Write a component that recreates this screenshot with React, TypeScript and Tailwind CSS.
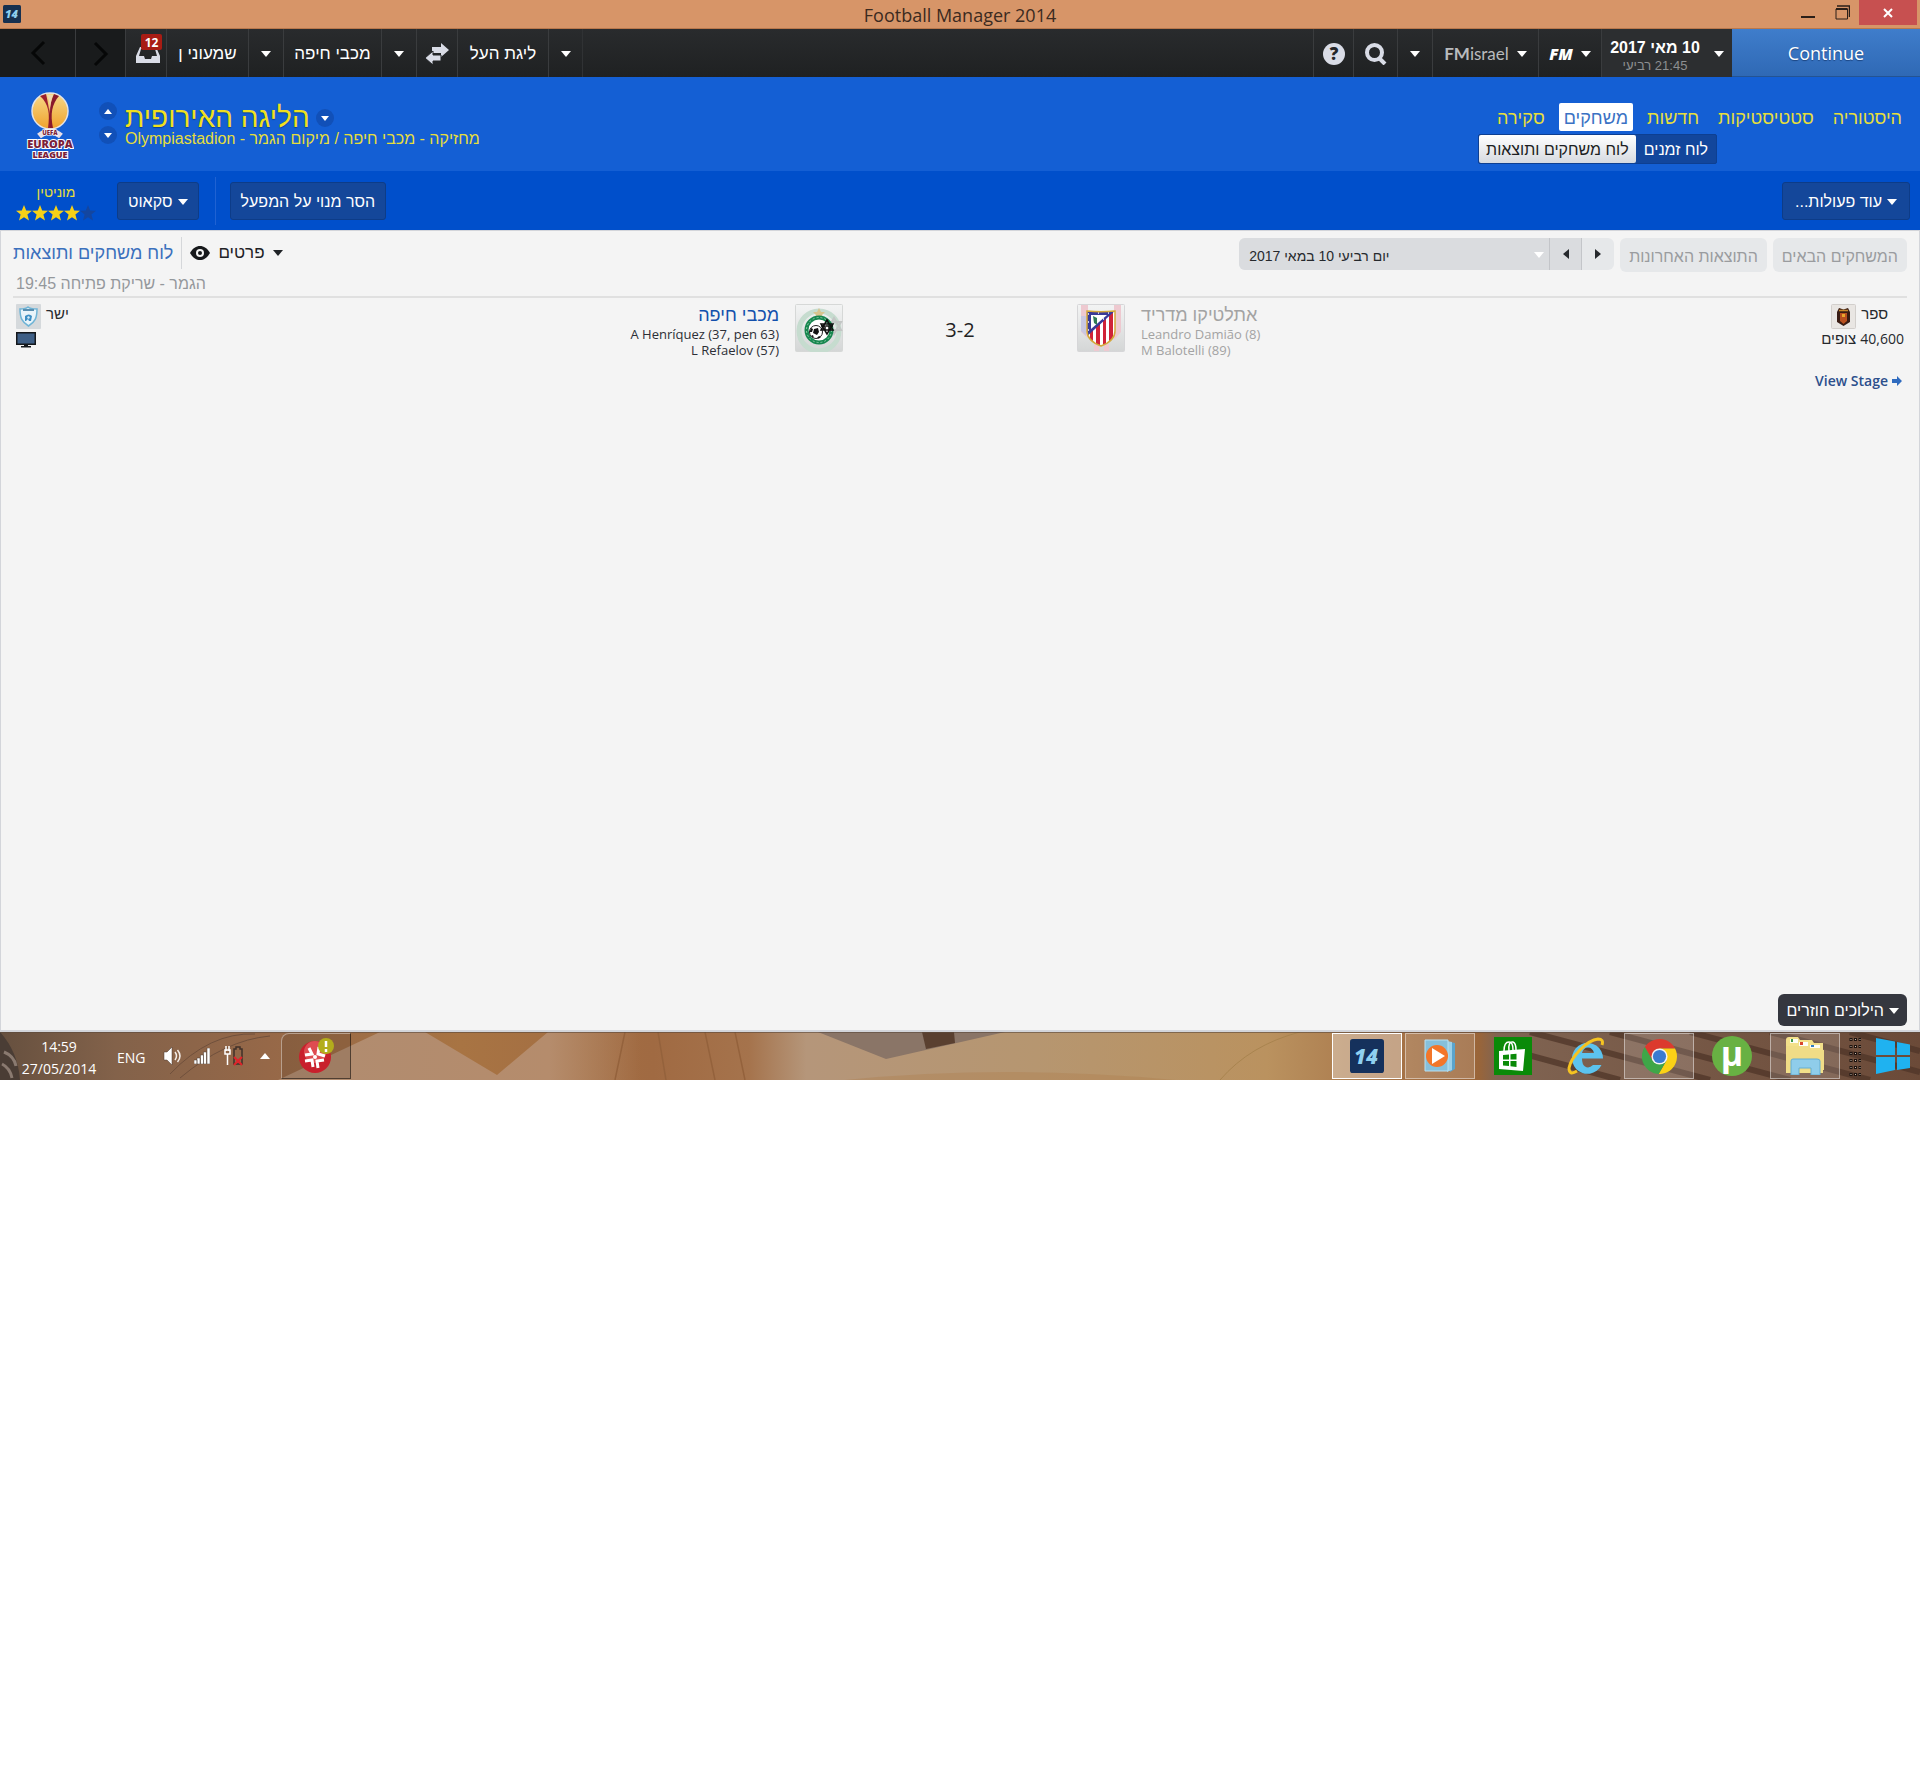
import type { ReactNode } from 'react';
import clsx from 'clsx';

const HE = 'font-["Liberation_Sans",sans-serif]';

function Caret({ className, up }: { className?: string; up?: boolean }) {
  return (
    <svg viewBox="0 0 10 6" className={clsx('w-[10px] h-[6px] shrink-0', up && 'rotate-180', className)} fill="currentColor">
      <path d="M0 0h10L5 6z" />
    </svg>
  );
}

/* ---------- Window title bar ---------- */

function GameIcon({ className, fill }: { className?: string; fill: string }) {
  return (
    <svg viewBox="0 0 36 36" className={className}>
      <rect width="36" height="36" rx="3" fill={fill} />
      <text x="17" y="26" textAnchor="middle" fontFamily="Open Sans, sans-serif" fontSize="22" fontWeight="800" fontStyle="italic" fill="#8fd0f0">
        14
      </text>
    </svg>
  );
}

function TitleBar() {
  return (
    <div className="relative flex items-center justify-between h-[29px] bg-[#d79568] border-b border-[#b9784c]">
      <GameIcon className="w-[18px] h-[18px] ml-[3px]" fill="#17304f" />
      <h1 className="absolute inset-x-0 top-0 text-center text-[18px] leading-[30px] text-[#3b2a20] pointer-events-none">
        Football Manager 2014
      </h1>
      <div className="relative flex self-start h-[25px] mr-[3px]">
        <button aria-label="Minimize" className="w-[34px] flex justify-center items-center pt-2">
          <span className="w-[14px] h-[2px] bg-[#2b1f18]" />
        </button>
        <button aria-label="Restore" className="w-[34px] flex justify-center items-center">
          <svg viewBox="0 0 15 15" className="w-[15px] h-[15px]" fill="none" stroke="#2b1f18">
            <path d="M2 1h12.500v11" strokeWidth="1.500" />
            <path d="M1 4h11.500v10H1z" />
            <path d="M1 4h11.500" strokeWidth="2" />
          </svg>
        </button>
        <button aria-label="Close" className="w-[58px] bg-[#c75050] flex justify-center items-center">
          <svg viewBox="0 0 10 10" className="w-[10px] h-[10px]" stroke="#fff" strokeWidth="2">
            <path d="M1 1l8 8M9 1L1 9" />
          </svg>
        </button>
      </div>
    </div>
  );
}

/* ---------- Main navigation ---------- */

function NavItem({ className, label, children }: { className?: string; label?: string; children: ReactNode }) {
  return (
    <button
      aria-label={label}
      className={clsx('h-full pt-[2px] flex items-center justify-center border-l border-[#3a3c3e] text-white shrink-0', className)}
    >
      {children}
    </button>
  );
}

function NavBar() {
  return (
    <nav className={clsx('flex h-12 bg-linear-to-b from-[#292b2d] to-[#1f2122] text-[17px]', HE)}>
      <button aria-label="Back" className="w-[75px] bg-[#191b1c] flex items-center justify-center">
        <svg viewBox="0 0 16 26" className="w-4 h-[26px]" fill="none" stroke="#060707" strokeWidth="3">
          <path d="M14 2L3 13l11 11" />
        </svg>
      </button>
      <NavItem label="Forward" className="w-[50px] bg-[#191b1c]">
        <svg viewBox="0 0 16 26" className="w-4 h-[26px]" fill="none" stroke="#060707" strokeWidth="3">
          <path d="M2 2l11 11L2 24" />
        </svg>
      </NavItem>
      <NavItem label="Inbox" className="relative w-[41px]">
        <svg viewBox="0 0 24 16" className="w-6 h-4 ml-1 mt-[2px]" fill="#d9dce6">
          <path d="M4 0h16l4 9v7H0V9zM5 2L3 9h5l1 3h6l1-3h5l-2-7z" fillRule="evenodd" />
        </svg>
        <span className="absolute left-[15px] top-[5px] w-[21px] h-4 bg-[#a81c14] rounded-xs text-[12px] leading-[17px] font-bold font-['Open_Sans',sans-serif]">
          12
        </span>
      </NavItem>
      <NavItem className="w-[82px]">שמעוני ן</NavItem>
      <NavItem label="Manager menu" className="w-[35px]"><Caret /></NavItem>
      <NavItem className="w-[98px]">מכבי חיפה</NavItem>
      <NavItem label="Club menu" className="w-[35px]"><Caret /></NavItem>
      <NavItem label="Transfers" className="w-[41px]">
        <svg viewBox="0 0 24 22" className="w-6 h-[22px]" fill="#d9dce6">
          <path d="M24 7l-8-7v4H7v6h9v4z" />
          <path d="M0 15l8-7v4h8v6H8v4z" stroke="#242628" strokeWidth="1" />
        </svg>
      </NavItem>
      <NavItem className="w-[91px]">ליגת העל</NavItem>
      <NavItem label="League menu" className="w-[34px]"><Caret /></NavItem>
      <span className="border-l border-[#303234] flex-1" />
      <NavItem label="Help" className="w-10">
        <svg viewBox="0 0 22 22" className="w-[22px] h-[22px]">
          <circle cx="11" cy="11" r="11" fill="#d9dce6" />
          <text x="11" y="17" textAnchor="middle" fontFamily="Open Sans, sans-serif" fontSize="17" fontWeight="800" fill="#242628">
            ?
          </text>
        </svg>
      </NavItem>
      <NavItem label="Search" className="w-11">
        <svg viewBox="0 0 22 22" className="w-[22px] h-[22px]" fill="none" stroke="#d9dce6">
          <circle cx="9.500" cy="9.500" r="7.500" strokeWidth="4" />
          <path d="M14 15l6 6" strokeWidth="4" />
        </svg>
      </NavItem>
      <NavItem label="Search menu" className="w-[35px]"><Caret /></NavItem>
      <NavItem className="w-[106px] gap-2 font-['Lato',sans-serif] !text-[#b9bbbd]">
        <span><b>FM</b>israel</span>
        <Caret className="text-white" />
      </NavItem>
      <NavItem className="w-[63px] gap-2 font-['Open_Sans',sans-serif]">
        <span className="text-[16px] font-extrabold italic">FM</span>
        <Caret />
      </NavItem>
      <NavItem className="w-[131px] gap-[14px] !bg-[#2c2e30]">
        <span className="flex flex-col items-center pt-1" dir="rtl">
          <span className="text-[16px] leading-5 font-bold">10 מאי 2017</span>
          <span className="text-[13px] leading-4 text-[#8d8f91]">21:45 רביעי</span>
        </span>
        <Caret />
      </NavItem>
      <button className="w-[188px] pt-[2px] bg-linear-to-b from-[#3f7dcb] to-[#2f69b5] border-b border-[#245493] text-white text-[18px] font-medium [text-shadow:0_1px_1px_#1b4480] font-['Open_Sans',sans-serif]">
        Continue
      </button>
    </nav>
  );
}

/* ---------- Competition header ---------- */

function EuropaLogo() {
  return (
    <svg viewBox="0 0 48 68" className="w-12 h-[68px]">
      <defs>
        <linearGradient id="ball" x1="0" y1="0" x2="0" y2="1">
          <stop offset="0" stopColor="#f6d98a" />
          <stop offset="1" stopColor="#f0a22c" />
        </linearGradient>
      </defs>
      <circle cx="24" cy="19" r="18" fill="url(#ball)" stroke="#e3e3e6" strokeWidth="1.500" />
      <path d="M14 4c9 8 10 18 8 32h4C24 24 22 10 20 2z" fill="#9c1f2e" />
      <path d="M33 4c-7 8-9 18-6 32h-3C22 24 24 10 28 2z" fill="#8a1a2c" />
      <path d="M21 3c3 6 3 12 3 17 0-6 1-12 3-17z" fill="#f0d9b0" />
      <path d="M13 44q11-9 22 0" fill="none" stroke="#e9dfe6" strokeWidth="6" />
      <g textAnchor="middle" fontFamily="Open Sans, sans-serif" fontWeight="800" fill="#7b1e3a" stroke="#fff" paintOrder="stroke">
        <text x="24" y="43" fontSize="6" strokeWidth="1">UEFA</text>
        <text x="24" y="56" fontSize="11" strokeWidth="2">EUROPA</text>
        <text x="24" y="66" fontSize="9" strokeWidth="2">LEAGUE</text>
      </g>
    </svg>
  );
}

function RoundCaret({ label, up }: { label: string; up?: boolean }) {
  return (
    <button aria-label={label} className="w-[18px] h-[18px] rounded-full bg-[#1150b8] flex items-center justify-center text-white">
      <Caret up={up} className="!w-2 !h-[5px]" />
    </button>
  );
}

const tabs = ['סקירה', 'משחקים', 'חדשות', 'סטטיסטיקות', 'היסטוריה'];

function Header() {
  return (
    <header className="flex justify-between h-[94px] bg-[#145fd4]">
      <div className="flex pt-[15px] pl-[26px]">
        <EuropaLogo />
        <div className="flex flex-col gap-[6px] pt-[10px] ml-[25px]">
          <RoundCaret label="Previous competition" up />
          <RoundCaret label="Next competition" />
        </div>
        <div className={clsx('ml-2 pt-[14px] text-[#f0e01e]', HE)}>
          <div className="flex items-center gap-[6px]">
            <h2 className="text-[28px] leading-6 [text-shadow:0_1px_1px_#0a3f96]">הליגה האירופית</h2>
            <RoundCaret label="Competition menu" />
          </div>
          <p dir="rtl" className="text-[16px] leading-[18px] text-[#e6de3c]">
            מחזיקה - מכבי חיפה / מיקום הגמר - Olympiastadion
          </p>
        </div>
      </div>
      <div className={clsx('pt-[26px] pr-[13px]', HE)}>
        <div className="flex items-center gap-[9px] text-[18px] leading-[30px]">
          {tabs.map((tab) => (
            <a
              key={tab}
              href="#"
              className={clsx(
                'h-7 rounded-xs px-[5px]',
                tab === 'משחקים' ? 'bg-white text-[#3a72c4]' : 'text-[#e6de3c]',
              )}
            >
              {tab}
            </a>
          ))}
        </div>
        <div className="mt-[3px] -ml-[14px] inline-flex rounded-xs border border-[#0d3f92] bg-[#12469c] text-[16px] leading-[30px]">
          <a href="#" className="h-7 px-[7px] rounded-xs bg-linear-to-b from-white to-[#d6dae0] text-[#1c1e22]">
            לוח משחקים ותוצאות
          </a>
          <a href="#" className="h-7 px-2 text-white">לוח זמנים</a>
        </div>
      </div>
    </header>
  );
}

/* ---------- Action bar ---------- */

function Star({ on }: { on: boolean }) {
  return (
    <svg viewBox="0 0 16 16" className="w-4 h-4" fill={on ? '#f7d117' : '#1346a0'}>
      <path d="M8 0l2.200 5.600 5.800.2-4.600 3.700L13 15.500 8 12.200l-5 3.300 1.600-6L0 5.800l5.800-.2z" />
    </svg>
  );
}

function ActionButton({ className, children }: { className?: string; children: ReactNode }) {
  return (
    <button
      className={clsx(
        'h-[38px] pt-[2px] px-[10px] flex items-center justify-center gap-[5px] rounded-[3px] border border-[#0d3c88] bg-[#14479a] text-white text-[16px]',
        className,
      )}
    >
      {children}
    </button>
  );
}

function ActionBar() {
  return (
    <div className={clsx('flex items-center h-[59px] bg-[#004fcb] pl-[15px] pr-[10px]', HE)}>
      <div className="w-[82px] flex flex-col items-center gap-[3px] pt-[1px]">
        <span className="text-[14px] leading-5 text-[#e6de3c]">מוניטין</span>
        <div className="flex">
          {[1, 2, 3, 4, 5].map((n) => <Star key={n} on={n < 5} />)}
        </div>
      </div>
      <ActionButton className="ml-5">סקאוט<Caret /></ActionButton>
      <span className="ml-4 mr-[14px] w-px h-12 bg-[#1f62d3]" />
      <ActionButton>הסר מנוי על המפעל</ActionButton>
      <ActionButton className="ml-auto min-w-32"><span dir="rtl">עוד פעולות...</span><Caret /></ActionButton>
    </div>
  );
}

/* ---------- Fixtures panel ---------- */

function IsraelCrest() {
  return (
    <svg viewBox="0 0 25 25" className="w-[25px] h-[25px]">
      <rect width="25" height="25" rx="1" fill="#d5d9dc" />
      <path d="M4 5c3 0 6 0 8-2 2 2 5 2 9 2 0 9-2 13-8.500 17C6 18 4 14 4 5z" fill="#e9f4fa" stroke="#6fb4d6" strokeWidth="1.500" />
      <path d="M7 6h11" stroke="#5a8fb0" strokeWidth="2" />
      <path d="M9 12q4-3 7 0l-1 5h-2l-1-2-2 2H9z" fill="#3f8fc4" />
      <path d="M11 13l2-1 1 2-2 1z" fill="#d7ecf7" />
    </svg>
  );
}

function SpainCrest() {
  return (
    <svg viewBox="0 0 25 25" className="w-[25px] h-[25px]">
      <rect x=".5" y=".5" width="24" height="24" rx="1" fill="#e9e6e3" stroke="#d2cfcc" />
      <path d="M6 8l2-4 4.500 1.500L17 4l2 4v10l-6.500 4L6 18z" fill="#3a1d14" />
      <path d="M9 9h7v8l-3.500 3L9 17z" fill="#b9501f" />
      <path d="M11 10h3v3h-3z" fill="#e9a92c" />
      <path d="M8 6.500h9" stroke="#c98b2b" strokeWidth="1.500" />
    </svg>
  );
}

function MaccabiCrest() {
  return (
    <svg viewBox="0 0 48 48" className="w-12 h-12">
      <defs>
        <linearGradient id="tile" x1="0" y1="0" x2="0" y2="1">
          <stop offset="0" stopColor="#f3f4f4" />
          <stop offset="1" stopColor="#d4d6d6" />
        </linearGradient>
      </defs>
      <rect x=".5" y=".5" width="47" height="47" rx="1" fill="url(#tile)" stroke="#d6d8d7" />
      <circle cx="24" cy="27" r="20" fill="none" stroke="#c6dccf" strokeWidth="5" />
      <path d="M24 4l2 4h4l-3 3 1 4-4-2-4 2 1-4-3-3h4z" fill="#d8c48e" />
      <path d="M39 14l7 12H32zM39 30l-7-12h14z" fill="none" stroke="#c3c6c5" strokeWidth="2" />
      <circle cx="24" cy="26" r="12.500" fill="#fff" stroke="#17874f" strokeWidth="4" />
      <circle cx="24" cy="26" r="12.500" fill="none" stroke="#8ec9a8" strokeWidth="1" strokeDasharray="2 2" />
      <circle cx="21" cy="28" r="6.500" fill="#fff" stroke="#222" strokeWidth="1" />
      <path d="M19 25l4-1 1 4-2 3-4-2zM14.500 28l1.500-4 2 1-1 3zM22 34l2-2 2 1-2 1.500zM16 32l2-1 1 3z" fill="#111" />
      <path d="M32 16l6 10H26zM32 30l-6-10h12z" fill="none" stroke="#111" strokeWidth="1.500" />
      <path d="M26 22h4v4M31 22h3v4M35 22h3" fill="none" stroke="#111" strokeWidth="1.500" />
    </svg>
  );
}

function AtleticoCrest() {
  return (
    <svg viewBox="0 0 48 48" className="w-12 h-12">
      <defs>
        <clipPath id="shield">
          <path d="M10 7c10 1 18 1 28 0v20c0 8-6 12-14 15-8-3-14-7-14-15z" />
        </clipPath>
      </defs>
      <rect x=".5" y=".5" width="47" height="47" rx="1" fill="url(#tile)" stroke="#d6d6d8" />
      <path d="M4 1h7v33l-7-6zM37 1h7v27l-7 8zM17 40h5v7h-5zM27 40h5v7h-5z" fill="#eec9d0" />
      <path d="M4 12h5v20l-5-5z" fill="#c9c8e2" />
      <g clipPath="url(#shield)">
        <path d="M8 5h32v40H8z" fill="#fff" />
        <path d="M13 5h3v40h-3zM19 5h4v40h-4zM26 5h3v40h-3zM32 5h4v40h-4z" fill="#d02339" />
        <path d="M8 5h32L8 34z" fill="#3a3a98" />
        <path d="M14 11h16L14 25z" fill="#fff" />
        <path d="M16 12l4 2v7l-3-2z" fill="#2f7a55" />
        <path d="M11 10h1M21 9h1M31 9h1M11 18h1M11 26h1M26 15h1" stroke="#fff" strokeWidth="1.500" />
      </g>
      <path d="M10 7c10 1 18 1 28 0v20c0 8-6 12-14 15-8-3-14-7-14-15z" fill="none" stroke="#d4a93a" strokeWidth="1.500" />
    </svg>
  );
}

function PanelToolbar() {
  return (
    <div className="flex justify-between h-[38px]">
      <div className="flex items-center pt-[6px]">
        <h3 className="text-[18px] leading-8 text-[#3b70bd]">לוח משחקים ותוצאות</h3>
        <span className="ml-2 mr-2 w-px h-8 bg-[#d5d7da]" />
        <button className="flex items-center gap-2 text-[17px] text-[#1f2226]">
          <svg viewBox="0 0 20 14" className="w-5 h-[14px]">
            <path d="M0 7c3-5 6-7 10-7s7 2 10 7c-3 5-6 7-10 7S3 12 0 7z" fill="#17191c" />
            <circle cx="10" cy="7" r="4" fill="#f4f4f4" />
            <circle cx="10" cy="7" r="2" fill="#17191c" />
          </svg>
          פרטים
          <Caret />
        </button>
      </div>
      <div className="flex pt-[7px] text-[16px]">
        <div className="relative flex h-8 rounded-md overflow-hidden bg-[#e6e8ea]">
          <select
            aria-label="תאריך"
            className="w-[310px] appearance-none bg-[#dadcdf] pl-[10px] pt-1 text-[14px] text-[#26292d]"
          >
            <option>יום רביעי 10 במאי 2017</option>
          </select>
          <Caret className="absolute left-[295px] top-[14px] text-white" />
          <button aria-label="Previous day" className="w-[33px] flex items-center justify-center border-x border-[#c3c5c9] bg-[#dadcdf]">
            <Caret className="rotate-90 text-[#26292d]" />
          </button>
          <button aria-label="Next day" className="w-8 flex items-center justify-center">
            <Caret className="-rotate-90 text-[#26292d]" />
          </button>
        </div>
        <button className="ml-[6px] h-[34px] px-[9px] pt-1 rounded-md bg-[#e6e8ea] text-[#9a9c9f]">התוצאות האחרונות</button>
        <button className="ml-[6px] h-[34px] px-[9px] pt-1 rounded-md bg-[#e6e8ea] text-[#9a9c9f]">המשחקים הבאים</button>
      </div>
    </div>
  );
}

function Scorers({ names }: { names: string[] }) {
  return (
    <ul className="text-[13px] leading-4 font-['Open_Sans',sans-serif]">
      {names.map((name) => <li key={name}>{name}</li>)}
    </ul>
  );
}

function MatchRow() {
  return (
    <div className="grid grid-cols-[1fr_2fr_1fr] pt-[6px] px-[3px]">
      <div className="flex flex-col gap-[3px]">
        <div className="flex gap-[5px]">
          <IsraelCrest />
          <span className="text-[15px] leading-5 text-[#26292d]">ישר</span>
        </div>
        <svg viewBox="0 0 20 16" className="w-5 h-4">
          <rect x=".75" y=".75" width="18.500" height="11.500" fill="#3f5f86" stroke="#15181c" strokeWidth="1.500" />
          <path d="M8 12h4v2h3v1.500H5V14h3z" fill="#15181c" />
        </svg>
      </div>
      <div className="grid grid-cols-[1fr_234px_1fr]">
        <div className="flex justify-end gap-4 text-right">
          <div>
            <a href="#" className="block text-[18px] leading-[22px] text-[#1250ac]">מכבי חיפה</a>
            <div className="text-[#2c2f36]"><Scorers names={['A Henríquez (37, pen 63)', 'L Refaelov (57)']} /></div>
          </div>
          <MaccabiCrest />
        </div>
        <span className="text-center text-[20px] leading-[52px] text-[#222] font-['Open_Sans',sans-serif]">3-2</span>
        <div className="flex gap-4">
          <AtleticoCrest />
          <div className="text-[#a3a3a3]">
            <a href="#" className="block text-[18px] leading-[22px]">אתלטיקו מדריד</a>
            <Scorers names={['Leandro Damião (8)', 'M Balotelli (89)']} />
          </div>
        </div>
      </div>
      <div className="flex flex-col items-end text-[#26292d]">
        <div className="flex gap-[5px] mr-4">
          <SpainCrest />
          <span className="text-[15px] leading-5">ספר</span>
        </div>
        <span dir="rtl" className="text-[15px] leading-5">
          <span className="text-[14px] font-['Open_Sans',sans-serif]">40,600</span> צופים
        </span>
        <a href="#" className="mt-[22px] mr-[2px] flex items-center gap-1 text-[14px] leading-5 font-semibold text-[#2c4f8c] font-['Open_Sans',sans-serif]">
          View Stage
          <svg viewBox="0 0 10 10" className="w-[10px] h-[10px]" fill="#2f6bbf">
            <path d="M0 3h5V0l5 5-5 5V7H0z" />
          </svg>
        </a>
      </div>
    </div>
  );
}

function FixturesPanel() {
  return (
    <main className={clsx('flex-1 flex flex-col bg-[#f4f4f4] border border-b-2 border-[#d3d5da] px-3', HE)}>
      <PanelToolbar />
      <p dir="rtl" className="self-start pl-[3px] pt-[3px] text-[16px] leading-6 text-[#94989c]">
        הגמר - שריקת פתיחה 19:45
      </p>
      <div className="border-t-2 border-[#e0e0e0]" />
      <MatchRow />
      <button className="mt-auto self-end mb-1 h-8 pt-[2px] px-2 flex items-center gap-[5px] rounded-md bg-[#35373f] text-[16px] text-white">
        הילוכים חוזרים
        <Caret />
      </button>
    </main>
  );
}

/* ---------- Windows taskbar ---------- */

function Wallpaper() {
  return (
    <svg viewBox="0 0 1920 48" preserveAspectRatio="none" className="absolute inset-0 w-full h-full">
      <defs>
        <linearGradient id="leather">
          <stop offset="0" stopColor="#66503f" />
          <stop offset=".06" stopColor="#83624a" />
          <stop offset=".14" stopColor="#966848" />
          <stop offset=".24" stopColor="#a87443" />
          <stop offset=".34" stopColor="#a06a42" />
          <stop offset=".39" stopColor="#a5734c" />
          <stop offset=".42" stopColor="#b5967a" />
          <stop offset=".54" stopColor="#b69670" />
          <stop offset=".66" stopColor="#ba925f" />
          <stop offset=".72" stopColor="#a8764a" />
          <stop offset=".77" stopColor="#9a6539" />
          <stop offset=".78" stopColor="#806452" />
          <stop offset="1" stopColor="#6b4a38" />
        </linearGradient>
        <linearGradient id="cloth">
          <stop offset="0" stopColor="#b08c70" />
          <stop offset=".75" stopColor="#b58c6c" />
          <stop offset="1" stopColor="#b58c6c" stopOpacity="0" />
        </linearGradient>
      </defs>
      <path d="M0 0h1920v48H0z" fill="url(#leather)" />
      <path d="M0 0q18 20 20 48H0z" fill="#4a3d35" />
      <path d="M4 20q10 4 12 14M2 32q8 4 10 14" stroke="#8a7a70" strokeWidth="3" fill="none" />
      <path d="M278 48L380 0h45l72 43L548 0h92v48z" fill="url(#cloth)" />
      <path d="M170 42Q210 0 255 2M180 46Q225 8 270 4" stroke="#70503c" strokeWidth="1" fill="none" />
      <path d="M658 0l8 48M705 0l10 48M735 0l10 48M625 0l-10 48" stroke="#94623c" strokeWidth="1.500" fill="none" />
      <path d="M818 0l68 27L1005 0z" fill="#8a7567" />
      <path d="M922 0h32l1 11-29 6z" fill="#5a4030" />
      <path d="M845 48q160-16 330 0z" fill="#b0804f" opacity=".4" />
      <path d="M1220 48q30-35 80-48" stroke="#a9844f" fill="none" />
      <g stroke="#4f3528" strokeWidth="6" opacity=".75">
        <path d="M1530 0l180 48M1610 0l180 48M1690 0l180 48M1770 0l150 40M1850 0l70 19M1510 18l110 30" />
      </g>
      <path d="M0 .5h1920" stroke="#5c4a3e" opacity=".6" />
    </svg>
  );
}

function TaskButton({ label, state, children }: { label: string; state?: 'open' | 'active'; children: ReactNode }) {
  return (
    <button
      aria-label={label}
      className={clsx(
        'w-[70px] h-[46px] flex items-center justify-center border',
        state === 'active' && 'border-white bg-white/35',
        state === 'open' && 'border-white/45 bg-white/15',
        !state && 'border-transparent',
      )}
    >
      {children}
    </button>
  );
}

function SystemTray() {
  return (
    <div className="relative flex items-center text-white text-[14px] font-['Open_Sans',sans-serif]">
      <div className="ml-5 pt-1 w-[78px] text-center leading-[22px]">
        <div>14:59</div>
        <div>27/05/2014</div>
      </div>
      <span className="ml-[19px] pt-[2px] w-7">ENG</span>
      <svg viewBox="0 0 20 20" className="ml-[18px] w-5 h-5" fill="#fff" stroke="#4b3a30" strokeWidth=".5">
        <path d="M1 6h3l5-5v18l-5-5H1z" />
        <path d="M12 6q3 4 0 8M14.500 4q5 6 0 12" fill="none" stroke="#f4eee9" strokeWidth="1.500" />
      </svg>
      <svg viewBox="0 0 16 16" className="ml-[11px] w-4 h-4" fill="#fff" stroke="#4b3a30" strokeWidth=".5">
        <path d="M0 12h3v4H0zM3 10h3v6H3zM6.500 7h3v9h-3zM9.500 4h3v12h-3zM13 0h3v16h-3z" />
      </svg>
      <svg viewBox="0 0 20 20" className="ml-[14px] w-5 h-5" fill="none">
        <path d="M2 0v5M5 0v5M1 4h5v4H1zM3.500 8v11" stroke="#fff" strokeWidth="1.500" />
        <path d="M10 3h2V1h4v2h2v15h-8z" stroke="#3f3029" strokeWidth="1.500" />
        <path d="M10 11l8 8M18 11l-8 8" stroke="#e0222a" strokeWidth="2" />
      </svg>
      <button aria-label="Show hidden icons" className="ml-[15px] w-3 flex justify-center"><Caret up /></button>
      <button aria-label="Antivirus" className="ml-[10px] w-[70px] h-[46px] rounded-tl-lg border border-l-white/40 border-t-white/40 border-r-black/50 border-b-black/50 bg-black/10 flex items-center justify-center">
        <svg viewBox="0 0 36 36" className="w-9 h-9">
          <circle cx="17" cy="19" r="16" fill="#c8202c" />
          <circle cx="17" cy="14" r="11" fill="#ec6a6a" opacity=".6" />
          <path d="M11 10l3 6-7 1M21 9l-1 7 7 2M7 23l7-1 1 7M20 30l-1-7 7-1" fill="none" stroke="#fff" strokeWidth="3" />
          <circle cx="17" cy="19" r="2" fill="#fff" />
          <circle cx="28" cy="8" r="8" fill="#b3ad1c" />
          <path d="M28 3v6M28 11v3" stroke="#fff" strokeWidth="2.500" />
        </svg>
      </button>
    </div>
  );
}

function Taskbar() {
  return (
    <footer className="relative h-12 flex justify-between">
      <Wallpaper />
      <SystemTray />
      <div className="relative flex items-center gap-[3px] pr-[10px]">
        <TaskButton label="Football Manager" state="active">
          <GameIcon className="w-[34px] h-[34px]" fill="#15315c" />
        </TaskButton>
        <TaskButton label="Media Player" state="open">
          <svg viewBox="0 0 32 34" className="w-8 h-[34px]">
            <path d="M26 3l5 1v26l-5 3z" fill="#5aa4cc" />
            <path d="M23 2l5 1v28l-5 2z" fill="#9bd0e8" />
            <path d="M1 1h23v31H1z" fill="#86c0dc" stroke="#b9e0f0" />
            <circle cx="13" cy="17" r="11" fill="#f3762a" />
            <path d="M8 9l13 8-13 8z" fill="#fff" />
          </svg>
        </TaskButton>
        <TaskButton label="Store">
          <svg viewBox="0 0 38 38" className="w-[38px] h-[38px]">
            <path d="M0 0h38v38H0z" fill="#0a8a08" />
            <path d="M5 14l26-2-2 22-24-2z" fill="#fff" />
            <path d="M10 14q0-9 5-9 4 0 4 8M15 14q-1-10 4-9 3 1 3 8" fill="none" stroke="#fff" strokeWidth="1.500" />
            <path d="M9 18l6-.5v5H9zM16.500 17.300l6-.5v5.700h-6zM9 24h6v5l-6-.5zM16.500 24h6v6l-6-.8z" fill="#0a8a08" />
          </svg>
        </TaskButton>
        <TaskButton label="Internet Explorer">
          <svg viewBox="0 0 38 38" className="w-[38px] h-[38px]">
            <path
              d="M36 21.500A15.500 15.500 0 1 0 34.500 28h-8.500q-4 4-8 1.500-3-2-3-8zM15 16q1.500-5.500 6-5.500T27 16z"
              fill="#5cc3ee"
              fillRule="evenodd"
            />
            <path d="M10 34Q2 39 2 31C4 20 20 3 31 2q6 0 4 6" fill="none" stroke="#f5c321" strokeWidth="3" />
          </svg>
        </TaskButton>
        <TaskButton label="Chrome" state="open">
          <svg viewBox="0 0 48 48" className="w-[35px] h-[35px]">
            <path d="M24 13h21.300A24 24 0 0 0 3.800 11l10.700 18.500L24 24z" fill="#dc3a2e" />
            <path d="M45.300 13A24 24 0 0 1 22.900 48l10.600-18.500L24 13z" fill="#fbd116" />
            <path d="M22.900 48A24 24 0 0 1 3.800 11l10.700 18.500h19z" fill="#3fa648" />
            <circle cx="24" cy="24" r="11" fill="#f4f4f4" />
            <circle cx="24" cy="24" r="9" fill="#3a7bd0" />
          </svg>
        </TaskButton>
        <TaskButton label="uTorrent">
          <span className="w-10 h-10 rounded-full bg-[#68b143] text-white text-[34px] leading-[34px] font-bold font-['Open_Sans',sans-serif]">
            µ
          </span>
        </TaskButton>
        <TaskButton label="File Explorer" state="open">
          <svg viewBox="0 0 40 38" className="w-10 h-[38px]">
            <path d="M1 3q0-3 3-3h9l2 3h12l2 3h9v30H1z" fill="#f3e08a" />
            <path d="M5 2h8v4H5zM14 5h9v4h-9zM25 8h10v3H25z" fill="#fdfdf5" />
            <path d="M6 2h2v3H6z" fill="#3f9a4a" />
            <path d="M15 5h3v3h-3z" fill="#d9452e" />
            <path d="M26 8h3v2h-3z" fill="#2f7dc0" />
            <path d="M1 9h23l2 4h13v20H1z" fill="#f0dc86" />
            <path d="M6 24q0-2 2-2h24q3 0 3 2v14h-9v-7H14v7H6z" fill="#8fcdea" stroke="#64aed2" />
          </svg>
        </TaskButton>
        <svg viewBox="0 0 12 40" className="ml-[6px] w-3 h-10">
          <path d="M2 2v38M6.500 2v38M11 2v38" stroke="#1d1410" strokeWidth="3" strokeDasharray="3 4" />
          <path d="M2 3v38M6.500 3v38M11 3v38" stroke="#cdbcae" strokeWidth="1" strokeDasharray="1 6" />
        </svg>
        <button aria-label="Start" className="ml-3">
          <svg viewBox="0 0 34 36" className="w-[34px] h-9" fill="#1fb2f0">
            <path d="M0 0l19 3.500v13.500H0zM21 4l13 2.500V17H21zM0 19h19v13L0 36zM21 19h13v11l-13 2z" />
          </svg>
        </button>
      </div>
    </footer>
  );
}

export default function App() {
  return (
    <div className="min-h-[1080px] flex flex-col bg-white font-['Open_Sans',sans-serif]">
      <TitleBar />
      <NavBar />
      <Header />
      <ActionBar />
      <FixturesPanel />
      <Taskbar />
    </div>
  );
}
